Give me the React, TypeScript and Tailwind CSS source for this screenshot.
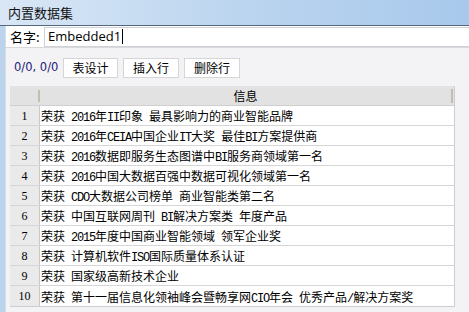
import React from 'react';

const rows: string[] = [
    '荣获 2016年II印象 最具影响力的商业智能品牌',
    '荣获 2016年CEIA中国企业IT大奖 最佳BI方案提供商',
    '荣获 2016数据即服务生态图谱中BI服务商领域第一名',
    '荣获 2016中国大数据百强中数据可视化领域第一名',
    '荣获 CDO大数据公司榜单 商业智能类第二名',
    '荣获 中国互联网周刊 BI解决方案类 年度产品',
    '荣获 2015年度中国商业智能领域 领军企业奖',
    '荣获 计算机软件ISO国际质量体系认证',
    '荣获 国家级高新技术企业',
    '荣获 第十一届信息化领袖峰会暨畅享网CIO年会 优秀产品/解决方案奖',
];

const cjkFont = { fontFamily: '"Noto Sans CJK SC", sans-serif' };
const asciiFont = { fontFamily: '"Liberation Mono", monospace' };

// half-width runs get a 6px-advance mono face, like the bitmap font in the dialog
const MixedText: React.FC<{ text: string }> = ({ text }) => {
    const parts = text.split(/([\x20-\x7e]+)/).filter(Boolean);
    return (
        <span className="whitespace-pre">
            {parts.map((p, i) =>
                /^[\x20-\x7e]+$/.test(p) ? (
                    <span key={i} className="text-[12px] tracking-[-1.2px]" style={asciiFont}>{p}</span>
                ) : (
                    <span key={i} className="text-[12px]" style={cjkFont}>{p}</span>
                )
            )}
        </span>
    );
};

const ToolButton: React.FC<{ label: string; width: string }> = ({ label, width }) => (
    <div
        className={`h-[20px] ${width} bg-white border border-[#d6d6d6] flex items-center justify-center text-[12px] text-black leading-none`}
        style={cjkFont}
    >
        {label}
    </div>
);

const App: React.FC = () => {
    return (
        <div className="w-[469px] h-[312px] overflow-hidden flex flex-col bg-[#f3f3f5]">
            {/* title bar */}
            <div className="h-[26px] shrink-0 bg-gradient-to-r from-[#d9e7f6] via-[#bcd5ef] to-[#a8c9ec] border-b border-[#56677d] flex items-center pl-[8px]">
                <span className="text-[13px] text-[#111] leading-none" style={cjkFont}>内置数据集</span>
            </div>

            <div className="flex flex-1 min-h-0">
                <div className="w-[6px] shrink-0 bg-[#bcd3ee] border-r border-[#d8dde4]" />

                <div className="flex-1 flex flex-col min-w-0">
                    {/* name row */}
                    <div className="h-[22px] shrink-0 bg-white border-b border-[#d9d9d9] flex items-center">
                        <span className="ml-[4px] w-[34px] text-[13px] text-black leading-none" style={cjkFont}>名字:</span>
                        <div className="flex-1 h-[20px] border border-[#cfd2d8] border-r-0 flex items-center pl-[3px]">
                            <span className="text-[13px] text-black leading-none" style={{ fontFamily: '"Open Sans", "Liberation Sans", sans-serif' }}>Embedded1</span>
                            <span className="w-[1px] h-[15px] bg-black ml-[1px]" />
                        </div>
                    </div>

                    {/* toolbar */}
                    <div className="h-[38px] shrink-0 flex items-center pl-[8px] pt-[1px]">
                        <span className="w-[49px] text-[#25207a] leading-none" style={{ fontFamily: '"DejaVu Sans", sans-serif', fontSize: '11.5px' }}>0/0, 0/0</span>
                        <div className="flex gap-[5px]">
                            <ToolButton label="表设计" width="w-[55px]" />
                            <ToolButton label="插入行" width="w-[56px]" />
                            <ToolButton label="删除行" width="w-[56px]" />
                        </div>
                    </div>

                    {/* table */}
                    <div className="ml-[4px] w-[445px] border-r border-b border-[#cdcdcd] bg-white">
                        <div className="h-[20px] flex bg-[#e2e2e2] border-b border-[#cfcfcf]">
                            <div className="w-[30px] flex items-center justify-end">
                                <div className="w-[2px] h-[12px] bg-[#c4bcae]" />
                            </div>
                            <div className="flex-1 flex items-center justify-center text-[12px] text-black" style={cjkFont}>信息</div>
                            <div className="w-[2px] h-[14px] self-center bg-[#c4bcae] mr-[1px]" />
                        </div>
                        {rows.map((text, i) => (
                            <div key={i} className="h-[20px] flex border-b border-[#d6d6d6] last:border-b-0">
                                <div
                                    className="w-[30px] shrink-0 bg-[#eaeaea] border-r border-[#c9c9c9] flex items-center justify-center text-[12px] text-black"
                                    style={{ fontFamily: '"Liberation Serif", serif' }}
                                >
                                    {i + 1}
                                </div>
                                <div className="flex-1 flex items-center pl-[1px] text-black overflow-hidden leading-none">
                                    <MixedText text={text} />
                                </div>
                            </div>
                        ))}
                    </div>
                </div>
            </div>
        </div>
    );
};

export default App;
